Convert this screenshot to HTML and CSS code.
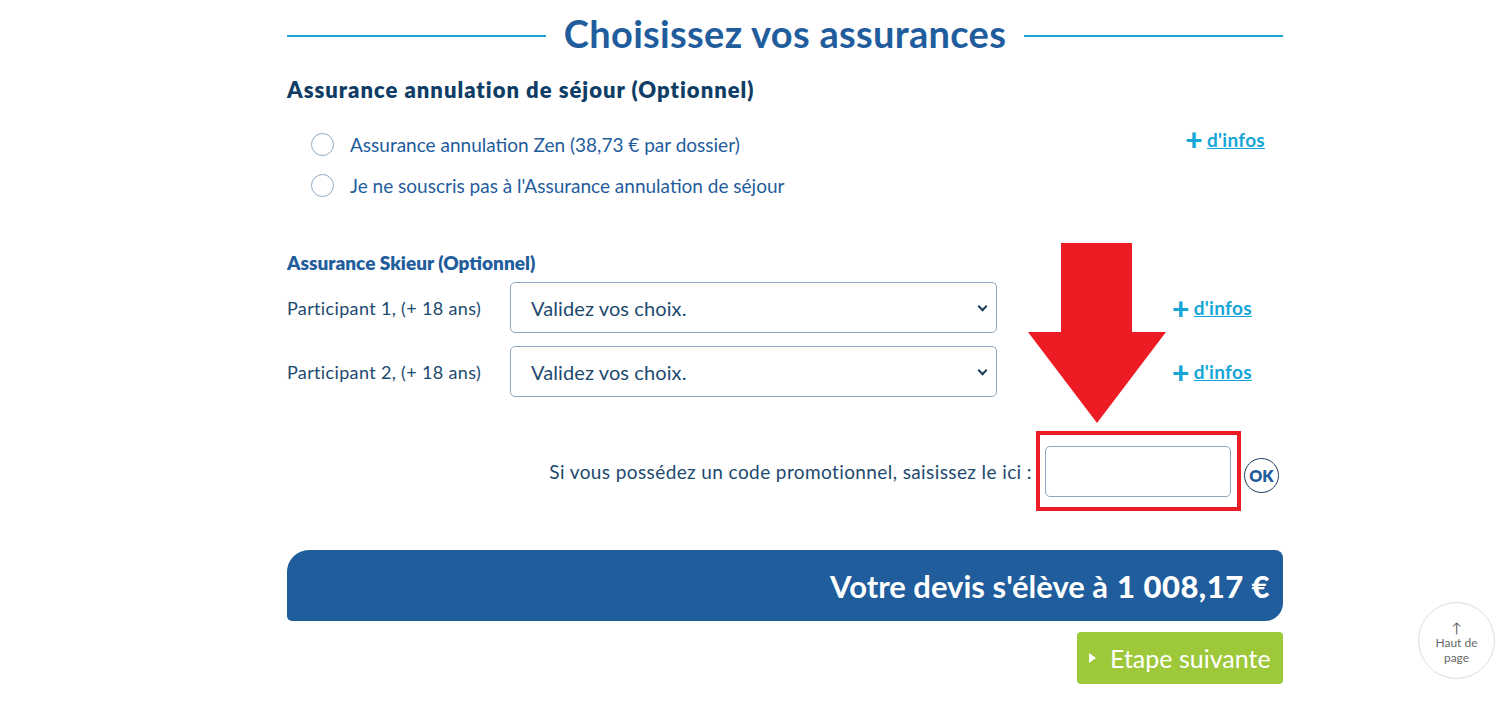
FILE: index.html
```html
<!DOCTYPE html>
<html lang="fr">
<head>
  <meta charset="UTF-8" />
  <meta name="viewport" content="width=device-width, initial-scale=1.0"/>
  <title>Choisissez vos assurances</title>
  <link rel="stylesheet" href="styles.css">
</head>
<body>
  <div class="container">
    <h1 class="title"><span>Choisissez vos assurances</span></h1>

    <!-- Assurance annulation -->
    <h2 class="section-title">Assurance annulation de séjour (Optionnel)</h2>
    <div class="radio-block">
      <div class="radio-list">
        <label class="radio-row"><span class="radio"></span>Assurance annulation Zen (38,73 € par dossier)</label>
        <label class="radio-row"><span class="radio"></span>Je ne souscris pas à l'Assurance annulation de séjour</label>
      </div>
      <a class="infos infos-top"><span class="plus">+</span><u>d'infos</u></a>
    </div>

    <!-- Assurance skieur -->
    <h3 class="sub-title">Assurance Skieur (Optionnel)</h3>
    <div class="participant">
      <span class="participant-label">Participant 1, (+ 18 ans)</span>
      <div class="select">Validez vos choix.<span class="chevron"></span></div>
      <a class="infos"><span class="plus">+</span><u>d'infos</u></a>
    </div>
    <div class="participant">
      <span class="participant-label">Participant 2, (+ 18 ans)</span>
      <div class="select">Validez vos choix.<span class="chevron"></span></div>
      <a class="infos"><span class="plus">+</span><u>d'infos</u></a>
    </div>

    <!-- Code promo -->
    <div class="promo">
      <span class="promo-text">Si vous possédez un code promotionnel, saisissez le ici :</span>
      <div class="promo-box">
        <div class="promo-input"></div>
        <div class="arrow">
          <div class="arrow-shaft"></div>
          <div class="arrow-head"></div>
        </div>
      </div>
      <span class="ok">OK</span>
    </div>

    <div class="total">Votre devis s'élève à <b>1 008,17 €</b></div>
    <div class="actions">
      <a class="next-btn"><span class="tri"></span>Etape suivante</a>
    </div>
  </div>

  <a class="top-link"><span class="top-arrow">↑</span><span>Haut de</span><span>page</span></a>
</body>
</html>
```

FILE: styles.css
```css
body {
  margin: 0;
  font-family: Lato, "Open Sans", sans-serif;
  color: #1f5d9c;
  background: #fff;
}

.container {
  width: 996px;
  margin-left: 287px;
}

.title {
  display: flex;
  align-items: center;
  gap: 18px;
  margin: 0;
  padding-top: 14px;
  height: 44px;
  font-size: 38px;
  font-weight: 700;
  letter-spacing: 0.3px;
  color: #1f5d9c;
  white-space: nowrap;
}

.title span {
  margin-top: -6px;
}

.title::before,
.title::after {
  content: "";
  flex: 1;
  height: 2px;
  background: #1aa3d9;
}

.section-title {
  margin: 18px 0 0;
  font-size: 22px;
  font-weight: 800;
  letter-spacing: 1px;
  color: #0f3d66;
}

.radio-block {
  display: flex;
  justify-content: space-between;
  align-items: flex-start;
  margin-top: 29px;
  padding-left: 24px;
  padding-right: 18px;
}

.radio-list {
  display: flex;
  flex-direction: column;
  gap: 17px;
}

.radio-row {
  display: flex;
  align-items: center;
  gap: 16px;
  font-size: 19px;
  height: 24px;
}

.radio {
  width: 23px;
  height: 23px;
  border: 1px solid #8ea8c2;
  border-radius: 50%;
  box-sizing: border-box;
}

.infos {
  display: flex;
  align-items: center;
  gap: 4px;
  color: #15a6d8;
  font-weight: 700;
  font-size: 19px;
  letter-spacing: 0.3px;
  cursor: pointer;
}

.infos-top {
  margin-top: -8px;
}

.plus {
  font-size: 30px;
  font-weight: 900;
  line-height: 1;
}

.sub-title {
  margin: 54px 0 0;
  font-size: 19px;
  font-weight: 800;
  color: #1f5d9c;
}

.participant {
  display: flex;
  align-items: center;
  margin-top: 8px;
}

.participant + .participant {
  margin-top: 13px;
}

.participant-label {
  width: 223px;
  font-size: 18px;
  letter-spacing: 0.35px;
  color: #1c4a6e;
}

.select {
  position: relative;
  width: 487px;
  height: 51px;
  box-sizing: border-box;
  border: 1px solid #8ea8c2;
  border-radius: 5px;
  padding-left: 20px;
  display: flex;
  align-items: center;
  font-size: 20px;
  letter-spacing: 0.1px;
  color: #1c4a6e;
  margin-right: 175px;
}

.chevron {
  position: absolute;
  right: 10px;
  top: 20px;
  width: 5px;
  height: 5px;
  border-right: 2px solid #1c3e5e;
  border-bottom: 2px solid #1c3e5e;
  transform: rotate(45deg);
}

.promo {
  display: flex;
  align-items: center;
  justify-content: flex-end;
  margin-top: 34px;
  padding-right: 4px;
}

.promo-text {
  font-size: 19px;
  letter-spacing: 0.4px;
  color: #1c4a6e;
  margin-right: 4px;
}

.promo-box {
  position: relative;
  width: 205px;
  height: 80px;
  box-sizing: border-box;
  border: 4px solid #ed1c24;
  padding: 11px 6px 10px 5px;
}

.promo-input {
  height: 51px;
  box-sizing: border-box;
  border: 1px solid #8ea8c2;
  border-radius: 5px;
}

.arrow {
  position: absolute;
  left: -13px;
  top: -192px;
  width: 139px;
  display: flex;
  flex-direction: column;
  align-items: center;
}

.arrow-shaft {
  width: 71px;
  height: 89px;
  background: #ed1c24;
}

.arrow-head {
  width: 0;
  height: 0;
  border-left: 69px solid transparent;
  border-right: 69px solid transparent;
  border-top: 91px solid #ed1c24;
}

.ok {
  width: 35px;
  height: 35px;
  box-sizing: border-box;
  border: 1.5px solid #1c3e5e;
  border-radius: 50%;
  display: flex;
  align-items: center;
  justify-content: center;
  font-size: 16px;
  font-weight: 800;
  color: #1f5d9c;
  margin-left: 3px;
  margin-top: 8px;
}

.total {
  margin-top: 39px;
  height: 71px;
  background: #1f5d9c;
  border-radius: 22px 8px 18px 5px;
  color: #fff;
  font-size: 31px;
  font-weight: 700;
  display: flex;
  align-items: center;
  justify-content: flex-end;
  gap: 9px;
  padding-right: 13px;
}

.total b {
  font-weight: 900;
  letter-spacing: 0.5px;
}

.actions {
  display: flex;
  justify-content: flex-end;
  margin-top: 11px;
}

.next-btn {
  display: flex;
  align-items: center;
  width: 206px;
  height: 52px;
  box-sizing: border-box;
  padding-left: 12px;
  background: #9dc83a;
  border-radius: 4px;
  color: #fff;
  font-size: 25px;
  cursor: pointer;
}

.tri {
  width: 0;
  height: 0;
  border-top: 5px solid transparent;
  border-bottom: 5px solid transparent;
  border-left: 7px solid #fff;
  margin-right: 14px;
}

.top-link {
  position: fixed;
  left: 1418px;
  top: 602px;
  width: 77px;
  height: 77px;
  box-sizing: border-box;
  border: 1px solid #dcdcdc;
  border-radius: 50%;
  display: flex;
  flex-direction: column;
  align-items: center;
  justify-content: center;
  font-size: 12px;
  line-height: 15px;
  color: #666;
  text-align: center;
  background: #fff;
}

.top-link .top-arrow {
  font-size: 14px;
  line-height: 14px;
  margin-top: 4px;
}
```
